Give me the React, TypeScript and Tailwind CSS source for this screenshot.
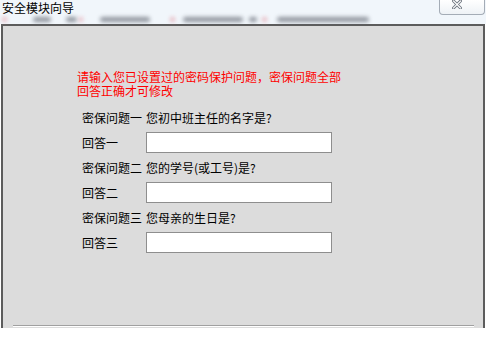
import React from "react";

const font = { fontFamily: '"Noto Sans CJK SC", "Noto Sans", sans-serif' };

function Blob({ w, red }: { w: number; red?: boolean }) {
  return (
    <div
      className={red ? "h-[5px] rounded-full bg-[#e49aa4] blur-[2px]" : "h-[5px] rounded-full bg-[#6f747e] blur-[2px]"}
      style={{ width: w }}
    />
  );
}

function QA({ q, qtext, a }: { q: string; qtext: string; a: string }) {
  return (
    <div className="flex flex-col">
      <div className="flex h-[24px] items-center whitespace-nowrap">
        <span className="w-[64px]">{q}</span>
        <span>{qtext}</span>
      </div>
      <div className="mt-[2px] flex h-[21px] items-center">
        <span className="w-[64px]">{a}</span>
        <div className="h-[21px] w-[186px] border border-[#8e8e8e] bg-white" />
      </div>
    </div>
  );
}

export default function App() {
  return (
    <div className="relative h-[342px] w-[486px] overflow-hidden bg-white text-[12px] text-black" style={font}>
      {/* title bar */}
      <div className="flex h-[24px] flex-col bg-[#f1f6fb]">
        <div className="h-[16px] pl-[2px] pt-[1px] leading-[14px]">安全模块向导</div>
        <div className="flex items-center pt-[1px] opacity-75">
          <div className="ml-[2px]" />
          <Blob w={5} red />
          <div className="w-[26px]" />
          <Blob w={18} />
          <div className="w-[15px]" />
          <Blob w={11} />
          <div className="w-[2px]" />
          <Blob w={4} red />
          <div className="w-[17px]" />
          <Blob w={50} />
          <div className="w-[20px]" />
          <Blob w={5} red />
          <div className="w-[8px]" />
          <Blob w={60} />
          <div className="w-[6px]" />
          <Blob w={8} />
          <div className="w-[5px]" />
          <Blob w={5} red />
          <div className="w-[10px]" />
          <Blob w={92} />
        </div>
      </div>

      {/* close button */}
      <div className="absolute right-[1px] top-0 h-[15px] w-[46px] rounded-b-[4px] border border-t-0 border-[#a4acb6] bg-gradient-to-b from-[#ffffff] to-[#eef2f6]">
        <svg className="absolute left-[12px] top-0" width="10" height="9" viewBox="0 0 10 9">
          <path d="M1.5 1 L8.5 8 M8.5 1 L1.5 8" stroke="#6f7680" strokeWidth="3" strokeLinecap="square" />
          <path d="M1.5 1 L8.5 8 M8.5 1 L1.5 8" stroke="#ffffff" strokeWidth="1.2" strokeLinecap="square" />
        </svg>
      </div>

      {/* panel */}
      <div className="ml-[1px] flex h-[304px] w-[484px] flex-col border-x-2 border-t-2 border-[#5c5c5c] bg-[#dcdcdc]">
        <div className="flex flex-col pl-[74px] pt-[44px]">
          <div className="whitespace-nowrap leading-[14px] text-[#ff0000]">
            <div>请输入您已设置过的密码保护问题，密保问题全部</div>
            <div>回答正确才可修改</div>
          </div>
          <div className="ml-[5px] mt-[8px] flex flex-col gap-[1px]">
            <QA q="密保问题一" qtext="您初中班主任的名字是?" a="回答一" />
            <div className="h-[1px]" />
            <QA q="密保问题二" qtext="您的学号(或工号)是?" a="回答二" />
            <div className="h-[1px]" />
            <QA q="密保问题三" qtext="您母亲的生日是?" a="回答三" />
          </div>
        </div>
        <div className="mb-[1px] ml-[10px] mt-auto h-[2px] w-[461px] border-b border-t border-b-white border-t-[#a0a0a0]" />
      </div>
    </div>
  );
}
